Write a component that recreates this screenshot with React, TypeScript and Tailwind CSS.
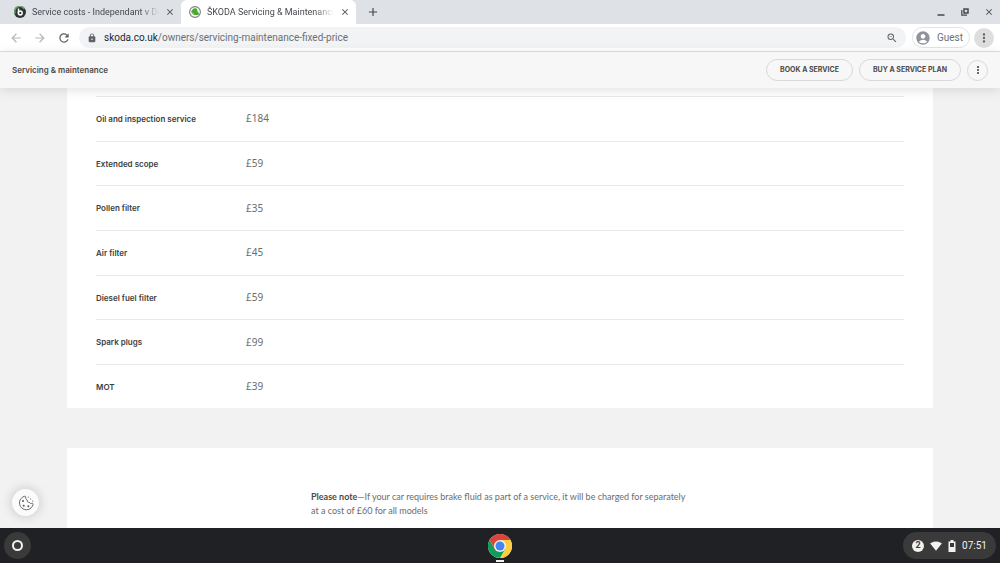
import React from "react";
import {
  MdAccountCircle,
  MdAdd,
  MdArrowBack,
  MdArrowForward,
  MdClose,
  MdLock,
  MdMoreVert,
  MdRefresh,
  MdSignalWifi4Bar,
  MdZoomOut,
} from "react-icons/md";

const prices = [
  { name: "Oil and inspection service", price: "£184" },
  { name: "Extended scope", price: "£59" },
  { name: "Pollen filter", price: "£35" },
  { name: "Air filter", price: "£45" },
  { name: "Diesel fuel filter", price: "£59" },
  { name: "Spark plugs", price: "£99" },
  { name: "MOT", price: "£39" },
];

const ForumIcon = () => (
  <svg viewBox="0 0 24 24" className="size-3 shrink-0">
    <circle cx="12" cy="12" r="12" fill="#2c3531" />
    <path d="M2.500 15a10 10 0 0 1 18-9" fill="none" stroke="#6f9f74" strokeWidth="3" />
    <path d="M9 5v9" stroke="#fff" strokeWidth="3" />
    <circle cx="12.500" cy="14" r="3.800" fill="none" stroke="#fff" strokeWidth="3" />
  </svg>
);

const SkodaIcon = () => (
  <svg viewBox="0 0 24 24" className="size-3 shrink-0">
    <circle cx="12" cy="12" r="10.800" fill="#f4f6f4" stroke="#7b827d" strokeWidth="2.200" />
    <path d="M5 10 8 6l4-2 4 2 1 5 3 4-1 3H9l1-3-5 1 2-3-3-1z" fill="#4ba82e" />
  </svg>
);

const CookieIcon = () => (
  <svg
    viewBox="0 0 24 24"
    className="size-4"
    fill="none"
    stroke="#5c5d5c"
    strokeWidth="1.400"
    strokeLinejoin="round"
  >
    <path d="M9.500 2A10.300 10.300 0 1 0 22.500 14.500c.3-1.500 0-2-1-2-2 .6-3.500.2-4-1.200-2.500 0-4.200-1.500-3.700-3.800C12 6.500 11.500 5 11.500 3c0-1-.8-1.200-2-1z" />
    <g fill="#5c5d5c" stroke="none">
      <circle cx="7.500" cy="9" r="1.500" />
      <circle cx="8.500" cy="16" r="1.500" />
      <circle cx="15.500" cy="17" r="1.500" />
      <circle cx="15.500" cy="3" r=".9" />
      <circle cx="19" cy="6" r=".9" />
      <circle cx="22" cy="9" r=".9" />
    </g>
  </svg>
);

const ChromeIcon = () => (
  <svg viewBox="0 0 48 48" className="size-6">
    <circle cx="24" cy="24" r="24" fill="#fff" />
    <path d="M24 24 3.200 12A24 24 0 0 1 44.800 12z" fill="#db4437" />
    <path d="M24 12h20.800A24 24 0 0 1 24 48l10.400-18z" fill="#ffcd40" />
    <path d="M3.200 12A24 24 0 0 0 24 48l10.400-18L24 24l-10.400 6z" fill="#0f9d58" />
    <path d="M3.200 12 13.600 30 24 24V12z" fill="#db4437" />
    <circle cx="24" cy="24" r="12" fill="#f1f1f1" />
    <circle cx="24" cy="24" r="9" fill="#4285f4" />
  </svg>
);

const BatteryIcon = () => (
  <svg viewBox="0 0 8 12" className="h-3 w-2">
    <path d="M2.500 0h3v1.500H7.500V12H.5V1.500h2z" fill="#f1f1f1" />
    <path d="M2 3h4v4H2z" fill="#3a3a3b" />
  </svg>
);

interface TabProps {
  title: string;
  icon: React.ReactNode;
  active?: boolean;
}

const Tab: React.FC<TabProps> = ({ title, icon, active }) => (
  <div
    className={`flex h-6 w-[175px] items-center gap-1.5 pr-1.5 pl-2 text-[#45494d] ${
      active ? "rounded-t-md bg-white" : ""
    }`}
  >
    {icon}
    <span className="min-w-0 flex-1 overflow-hidden pt-px text-[9px] whitespace-nowrap [mask-image:linear-gradient(to_right,black_85%,transparent)]">
      {title}
    </span>
    <button aria-label="Close tab">
      <MdClose className="size-2.5" />
    </button>
  </div>
);

const BrowserBar = () => (
  <header className="font-[Roboto,sans-serif]">
    <div className="flex h-6 items-center bg-[#dee1e6] pl-1.5 text-[#45494d]">
      <Tab title="Service costs - Independant v Dealer" icon={<ForumIcon />} />
      <Tab title="ŠKODA Servicing & Maintenance" icon={<SkodaIcon />} active />
      <button aria-label="New tab" className="ml-2.5">
        <MdAdd className="size-3.5" />
      </button>
      <div className="ml-auto flex items-center gap-3.5 pr-1.5">
        <button aria-label="Minimise">
          <svg viewBox="0 0 10 10" className="size-2.5">
            <path d="M1.500 8h7" stroke="currentColor" strokeWidth="1.500" />
          </svg>
        </button>
        <button aria-label="Restore">
          <svg viewBox="0 0 10 10" className="size-2.5" fill="none" stroke="currentColor">
            <path d="M4 2h4v4H4z" strokeWidth="1.500" />
            <path d="M1.800 3v5.200H7" strokeWidth="1.200" />
          </svg>
        </button>
        <button aria-label="Close window">
          <MdClose className="size-2.5" />
        </button>
      </div>
    </div>
    <div className="flex h-7 items-center border-b border-[#dfe0e2] bg-white pr-1.5 pl-[9px] text-[#5f6368]">
      <div className="flex items-center gap-2.5">
        <button aria-label="Back" className="text-[#b4b6b9]">
          <MdArrowBack className="size-3.5" />
        </button>
        <button aria-label="Forward" className="text-[#b4b6b9]">
          <MdArrowForward className="size-3.5" />
        </button>
        <button aria-label="Reload">
          <MdRefresh className="size-3.5" />
        </button>
      </div>
      <div className="ml-2 flex h-[21px] flex-1 items-center rounded-full bg-[#f1f3f4] px-2">
        <MdLock className="size-2.5" />
        <span className="ml-[7px] flex-1 text-[10px] text-[#6c7074]">
          <span className="text-[#26282b]">skoda.co.uk</span>
          /owners/servicing-maintenance-fixed-price
        </span>
        <button aria-label="Zoom">
          <MdZoomOut className="size-3" />
        </button>
      </div>
      <button className="ml-1.5 flex h-[21px] items-center gap-1.5 rounded-full border border-[#e1e3e6] pr-1.5 pl-0.5 text-[10px] text-[#6c7074]">
        <MdAccountCircle className="size-4 text-[#8f949b]" />
        Guest
      </button>
      <button
        aria-label="Menu"
        className="ml-1 flex size-5 items-center justify-center rounded-full bg-[#dededf]"
      >
        <MdMoreVert className="size-3.5" />
      </button>
    </div>
  </header>
);

const PageNav = () => (
  <nav className="relative z-10 flex h-9 items-center gap-1.5 bg-[#f7f7f7] px-3 font-[Inter,sans-serif] text-[#4a4b4a] shadow-[0_2px_12px_rgba(0,0,0,0.12)]">
    <span className="flex-1 text-[8px] font-semibold">Servicing & maintenance</span>
    <button className="h-[22px] rounded-full border border-[#d9d9d9] px-[13px] text-[7px] font-bold">
      BOOK A SERVICE
    </button>
    <button className="h-[22px] rounded-full border border-[#d9d9d9] px-[13px] text-[7px] font-bold">
      BUY A SERVICE PLAN
    </button>
    <button
      aria-label="More"
      className="flex size-[21px] items-center justify-center rounded-full border border-[#d9d9d9]"
    >
      <MdMoreVert className="size-3" />
    </button>
  </nav>
);

const PriceTable = () => (
  <section className="mx-[67px] bg-white px-[29px] pt-2">
    <table className="h-[312px] w-full text-left">
      <tbody>
        {prices.map((item) => (
          <tr key={item.name} className="border-t border-[#e9e9e9]">
            <th
              scope="row"
              className="w-[150px] font-[Inter,sans-serif] text-[8px] font-semibold text-[#3c3d3c]"
            >
              {item.name}
            </th>
            <td className="text-[10px] text-[#6b6c6b]">{item.price}</td>
          </tr>
        ))}
      </tbody>
    </table>
  </section>
);

const Shelf = () => (
  <footer className="grid h-[35px] shrink-0 grid-cols-3 items-center bg-[#202124] px-1 font-[Roboto,sans-serif] text-[#f1f1f1]">
    <button
      aria-label="Launcher"
      className="flex size-[27px] items-center justify-center rounded-full bg-[#3a3a3b]"
    >
      <span className="size-[11px] rounded-full border-2 border-[#f1f1f1]" />
    </button>
    <button
      aria-label="Chrome"
      className="flex flex-col items-center gap-0.5 justify-self-center pt-1"
    >
      <ChromeIcon />
      <span className="h-0.5 w-2 bg-[#f1f1f1]" />
    </button>
    <button className="flex h-[27px] items-center gap-1.5 justify-self-end rounded-full bg-[#3a3a3b] px-[9px] text-[10px]">
      <span className="flex size-3 items-center justify-center rounded-full bg-[#f1f1f1] text-[9px] font-bold text-[#3a3a3b]">
        2
      </span>
      <MdSignalWifi4Bar className="size-3" />
      <BatteryIcon />
      07:51
    </button>
  </footer>
);

const App: React.FC = () => {
  return (
    <div className="flex h-screen flex-col overflow-hidden bg-[#f2f2f2] font-['Noto_Sans',sans-serif]">
      <BrowserBar />
      <PageNav />
      <main className="relative min-h-0 flex-1 overflow-hidden">
        <PriceTable />
        <section className="mx-[67px] mt-10 h-full bg-white pt-[42px]">
          <p className="mx-auto w-[378px] font-[Lato,sans-serif] text-[9px] leading-[14px] text-[#6b6c6b]">
            <strong className="text-[#4a4b4a]">Please note</strong>—If your car requires brake fluid as part of a
            service, it will be charged for separately at a cost of £60 for all models
          </p>
        </section>
        <button
          aria-label="Cookie settings"
          className="absolute bottom-3 left-3 flex size-[27px] items-center justify-center rounded-full bg-[#fbfbfb] shadow-[0_0_12px_rgba(0,0,0,0.2)]"
        >
          <CookieIcon />
        </button>
      </main>
      <Shelf />
    </div>
  );
};

export default App;
